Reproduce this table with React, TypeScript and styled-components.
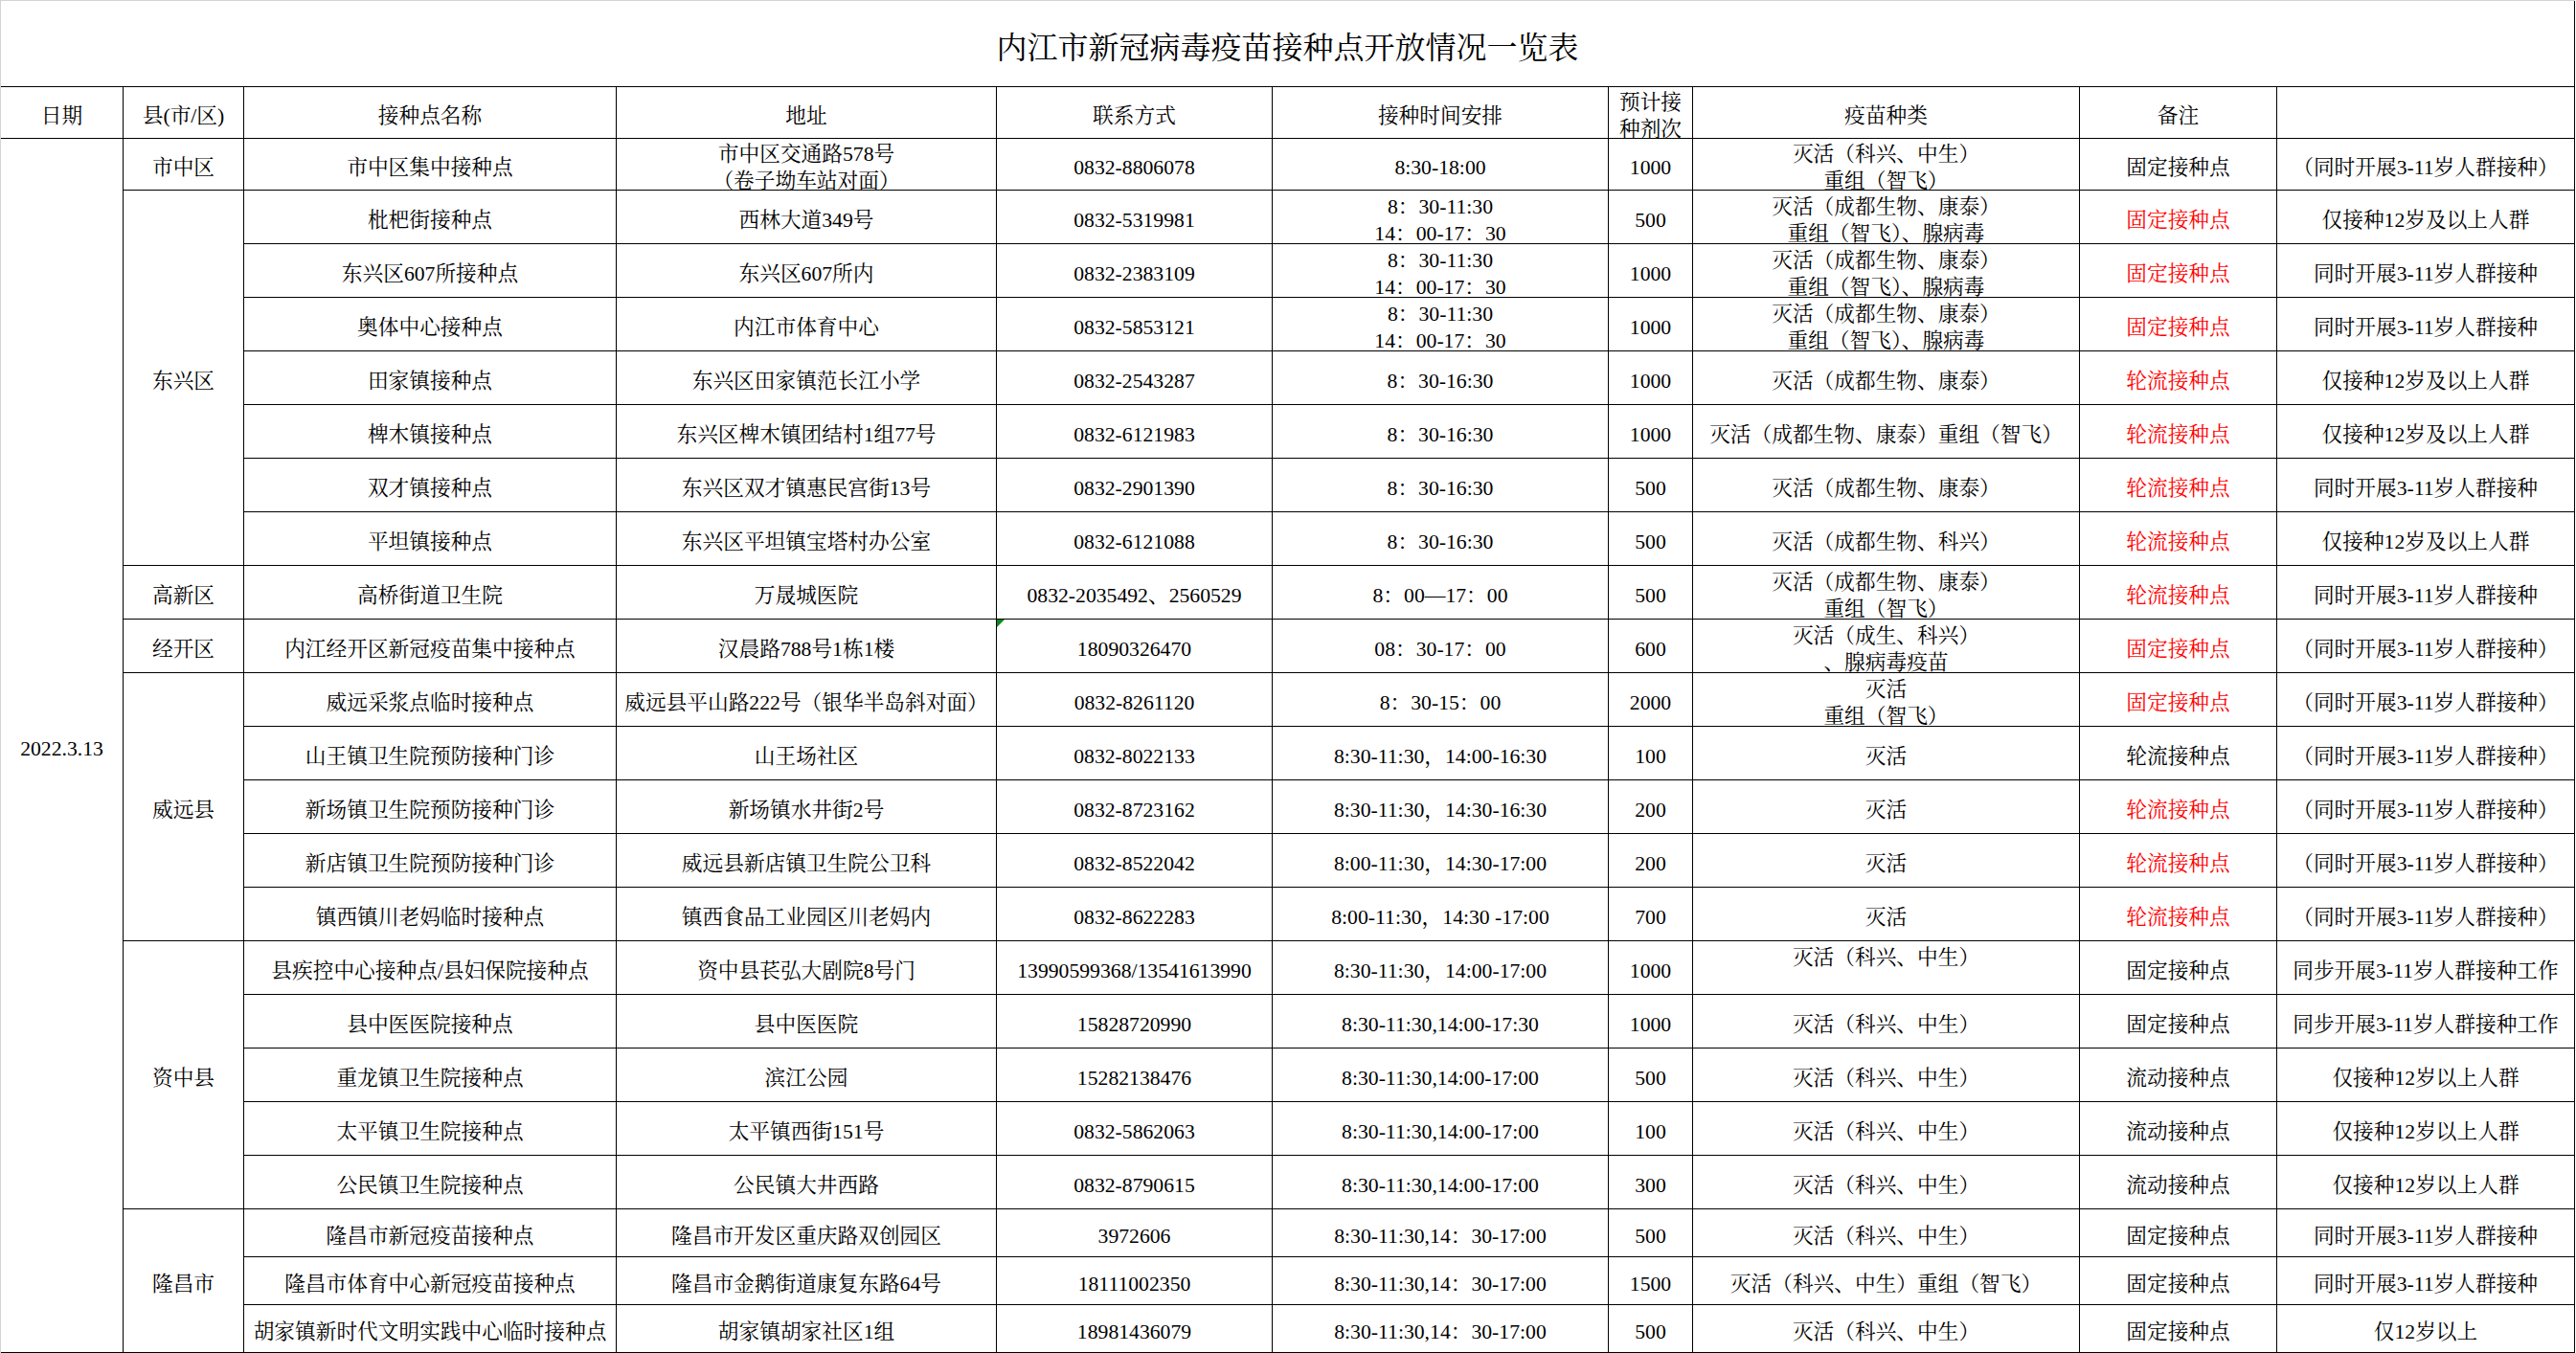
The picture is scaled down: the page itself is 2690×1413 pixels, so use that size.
import React from 'react';
import styled, { createGlobalStyle } from 'styled-components';

interface Site {
    name: string;
    addr: string;
    tel: string;
    time: string;
    count: string;
    vaccine: string;
    note: string;
    noteRed?: boolean;
    extra: string;
    vaccineTop?: boolean;
    mark?: boolean;
}

interface County {
    county: string;
    sites: Site[];
}

const ZXF = '灭活（科兴、中生）';
const DX2 = '灭活（成都生物、康泰）\n重组（智飞）、腺病毒';
const WY = '（同时开展3-11岁人群接种）';
const TS = '同时开展3-11岁人群接种';
const J12 = '仅接种12岁及以上人群';

const data: County[] = [
    {
        county: '市中区',
        sites: [
            { name: '市中区集中接种点', addr: '市中区交通路578号\n（卷子坳车站对面）', tel: '0832-8806078', time: '8:30-18:00', count: '1000', vaccine: ZXF + '\n重组（智飞）', note: '固定接种点', extra: WY },
        ],
    },
    {
        county: '东兴区',
        sites: [
            { name: '枇杷街接种点', addr: '西林大道349号', tel: '0832-5319981', time: '8：30-11:30\n14：00-17：30', count: '500', vaccine: DX2, note: '固定接种点', noteRed: true, extra: J12 },
            { name: '东兴区607所接种点', addr: '东兴区607所内', tel: '0832-2383109', time: '8：30-11:30\n14：00-17：30', count: '1000', vaccine: DX2, note: '固定接种点', noteRed: true, extra: TS },
            { name: '奥体中心接种点', addr: '内江市体育中心', tel: '0832-5853121', time: '8：30-11:30\n14：00-17：30', count: '1000', vaccine: DX2, note: '固定接种点', noteRed: true, extra: TS },
            { name: '田家镇接种点', addr: '东兴区田家镇范长江小学', tel: '0832-2543287', time: '8：30-16:30', count: '1000', vaccine: '灭活（成都生物、康泰）', note: '轮流接种点', noteRed: true, extra: J12 },
            { name: '椑木镇接种点', addr: '东兴区椑木镇团结村1组77号', tel: '0832-6121983', time: '8：30-16:30', count: '1000', vaccine: '灭活（成都生物、康泰）重组（智飞）', note: '轮流接种点', noteRed: true, extra: J12 },
            { name: '双才镇接种点', addr: '东兴区双才镇惠民宫街13号', tel: '0832-2901390', time: '8：30-16:30', count: '500', vaccine: '灭活（成都生物、康泰）', note: '轮流接种点', noteRed: true, extra: TS },
            { name: '平坦镇接种点', addr: '东兴区平坦镇宝塔村办公室', tel: '0832-6121088', time: '8：30-16:30', count: '500', vaccine: '灭活（成都生物、科兴）', note: '轮流接种点', noteRed: true, extra: J12 },
        ],
    },
    {
        county: '高新区',
        sites: [
            { name: '高桥街道卫生院', addr: '万晟城医院', tel: '0832-2035492、2560529', time: '8：00—17：00', count: '500', vaccine: '灭活（成都生物、康泰）\n重组（智飞）', note: '轮流接种点', noteRed: true, extra: TS },
        ],
    },
    {
        county: '经开区',
        sites: [
            { name: '内江经开区新冠疫苗集中接种点', addr: '汉晨路788号1栋1楼', tel: '18090326470', time: '08：30-17：00', count: '600', vaccine: '灭活（成生、科兴）\n、腺病毒疫苗', note: '固定接种点', noteRed: true, extra: WY, mark: true },
        ],
    },
    {
        county: '威远县',
        sites: [
            { name: '威远采浆点临时接种点', addr: '威远县平山路222号（银华半岛斜对面）', tel: '0832-8261120', time: '8：30-15：00', count: '2000', vaccine: '灭活\n重组（智飞）', note: '固定接种点', noteRed: true, extra: WY },
            { name: '山王镇卫生院预防接种门诊', addr: '山王场社区', tel: '0832-8022133', time: '8:30-11:30，14:00-16:30', count: '100', vaccine: '灭活', note: '轮流接种点', extra: WY },
            { name: '新场镇卫生院预防接种门诊', addr: '新场镇水井街2号', tel: '0832-8723162', time: '8:30-11:30，14:30-16:30', count: '200', vaccine: '灭活', note: '轮流接种点', noteRed: true, extra: WY },
            { name: '新店镇卫生院预防接种门诊', addr: '威远县新店镇卫生院公卫科', tel: '0832-8522042', time: '8:00-11:30，14:30-17:00', count: '200', vaccine: '灭活', note: '轮流接种点', noteRed: true, extra: WY },
            { name: '镇西镇川老妈临时接种点', addr: '镇西食品工业园区川老妈内', tel: '0832-8622283', time: '8:00-11:30，14:30 -17:00', count: '700', vaccine: '灭活', note: '轮流接种点', noteRed: true, extra: WY },
        ],
    },
    {
        county: '资中县',
        sites: [
            { name: '县疾控中心接种点/县妇保院接种点', addr: '资中县苌弘大剧院8号门', tel: '13990599368/13541613990', time: '8:30-11:30，14:00-17:00', count: '1000', vaccine: ZXF, vaccineTop: true, note: '固定接种点', extra: '同步开展3-11岁人群接种工作' },
            { name: '县中医医院接种点', addr: '县中医医院', tel: '15828720990', time: '8:30-11:30,14:00-17:30', count: '1000', vaccine: ZXF, note: '固定接种点', extra: '同步开展3-11岁人群接种工作' },
            { name: '重龙镇卫生院接种点', addr: '滨江公园', tel: '15282138476', time: '8:30-11:30,14:00-17:00', count: '500', vaccine: ZXF, note: '流动接种点', extra: '仅接种12岁以上人群' },
            { name: '太平镇卫生院接种点', addr: '太平镇西街151号', tel: '0832-5862063', time: '8:30-11:30,14:00-17:00', count: '100', vaccine: ZXF, note: '流动接种点', extra: '仅接种12岁以上人群' },
            { name: '公民镇卫生院接种点', addr: '公民镇大井西路', tel: '0832-8790615', time: '8:30-11:30,14:00-17:00', count: '300', vaccine: ZXF, note: '流动接种点', extra: '仅接种12岁以上人群' },
        ],
    },
    {
        county: '隆昌市',
        sites: [
            { name: '隆昌市新冠疫苗接种点', addr: '隆昌市开发区重庆路双创园区', tel: '3972606', time: '8:30-11:30,14：30-17:00', count: '500', vaccine: ZXF, note: '固定接种点', extra: TS },
            { name: '隆昌市体育中心新冠疫苗接种点', addr: '隆昌市金鹅街道康复东路64号', tel: '18111002350', time: '8:30-11:30,14：30-17:00', count: '1500', vaccine: ZXF + '重组（智飞）', note: '固定接种点', extra: TS },
            { name: '胡家镇新时代文明实践中心临时接种点', addr: '胡家镇胡家社区1组', tel: '18981436079', time: '8:30-11:30,14：30-17:00', count: '500', vaccine: ZXF, note: '固定接种点', extra: '仅12岁以上' },
        ],
    },
];

const headers = ['日期', '县(市/区)', '接种点名称', '地址', '联系方式', '接种时间安排', '预计接\n种剂次', '疫苗种类', '备注', ''];

const totalRows = data.reduce((n, c) => n + c.sites.length, 0);

export default function App() {
    return (
        <>
            <GlobalStyle />
            <Sheet>
                <Title>内江市新冠病毒疫苗接种点开放情况一览表</Title>
                <Grid>
                    {headers.map((h, i) => (
                        <Cell key={`h${i}`}>{h}</Cell>
                    ))}
                    <Cell $span={totalRows}>2022.3.13</Cell>
                    {data.map((c) =>
                        c.sites.map((s, i) => (
                            <React.Fragment key={s.name}>
                                {i === 0 && <Cell $span={c.sites.length}>{c.county}</Cell>}
                                <Cell>{s.name}</Cell>
                                <Cell>{s.addr}</Cell>
                                <Cell>
                                    {s.mark && <Mark />}
                                    {s.tel}
                                </Cell>
                                <Cell>{s.time}</Cell>
                                <Cell>{s.count}</Cell>
                                <Cell $top={s.vaccineTop}>{s.vaccine}</Cell>
                                <Cell $red={s.noteRed}>{s.note}</Cell>
                                <Cell>{s.extra}</Cell>
                            </React.Fragment>
                        ))
                    )}
                </Grid>
            </Sheet>
        </>
    );
}

const GlobalStyle = createGlobalStyle`
    html, body {
        margin: 0;
        padding: 0;
        background: #fff;
    }
    body {
        font-family: "Liberation Serif", "Noto Serif CJK SC", "Noto Sans CJK SC", serif;
        color: #000;
    }
`;

const Sheet = styled.div`
    width: 2689px;
    box-sizing: border-box;
    border-left: 1px solid #d4d4d4;
    border-top: 1px solid #d4d4d4;
`;

const Title = styled.div`
    height: 90px;
    box-sizing: border-box;
    border-right: 1px solid #000;
    border-bottom: 1px solid #000;
    display: flex;
    align-items: center;
    justify-content: center;
    font-size: 32px;
    padding-top: 2px;
`;

const Grid = styled.div`
    display: grid;
    grid-template-columns: 128px 126px 389px 397px 288px 351px 88px 404px 206px 311px;
    grid-template-rows: 54px 54px repeat(19, 56px) repeat(3, 50px);
`;

const Cell = styled.div<{ $span?: number; $red?: boolean; $top?: boolean }>`
    position: relative;
    grid-row: ${(p) => (p.$span ? `span ${p.$span}` : 'auto')};
    box-sizing: border-box;
    border-right: 1px solid #000;
    border-bottom: 1px solid #000;
    display: flex;
    align-items: center;
    justify-content: center;
    text-align: center;
    white-space: pre-line;
    font-size: 21.7px;
    line-height: 28px;
    color: ${(p) => (p.$red ? '#ff0000' : '#000')};
    padding-top: 6px;
    padding-bottom: ${(p) => (p.$top ? '28px' : '0')};
    overflow: hidden;
`;

const Mark = styled.span`
    position: absolute;
    left: 0;
    top: 0;
    width: 0;
    height: 0;
    border-top: 8px solid #0a8a1a;
    border-right: 8px solid transparent;
`;
